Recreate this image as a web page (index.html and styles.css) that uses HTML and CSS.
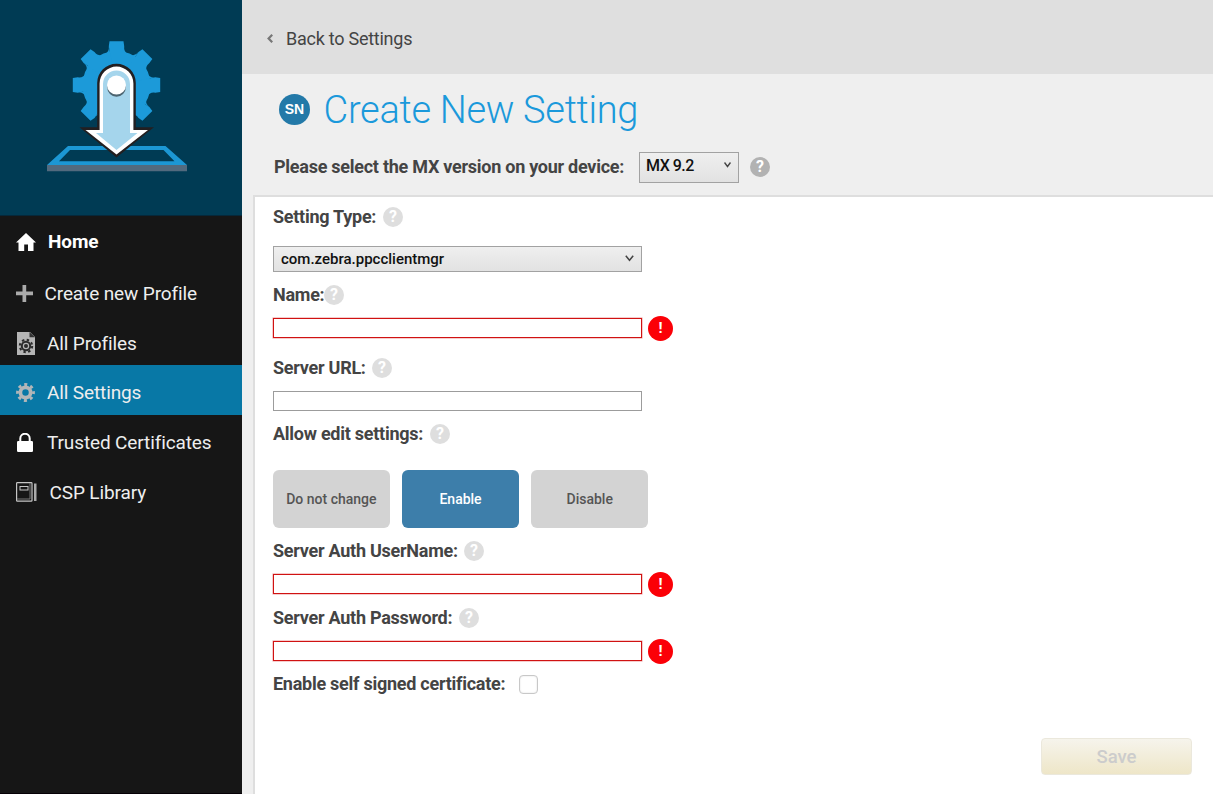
FILE: index.html
```html
<!DOCTYPE html>
<html lang="en">
<head>
<meta charset="utf-8">
<title>Create New Setting</title>
<link rel="stylesheet" href="styles.css">
</head>
<body>
<div class="app">
  <aside class="sidebar">
    <div class="brand">
      <svg width="242" height="214" viewBox="0 0 242 214">
        <defs><path id="tooth" d="M0 0L-7.7-38.8L-7-43.7H7L7.700-38.800A8 8 0 0 0 21.990-32.880Z"/></defs>
        <g transform="translate(116.5 85)" fill="#1c9ad9">
          <circle r="34"/>
          <use href="#tooth"/><use href="#tooth" transform="rotate(45)"/><use href="#tooth" transform="rotate(90)"/><use href="#tooth" transform="rotate(135)"/><use href="#tooth" transform="rotate(180)"/><use href="#tooth" transform="rotate(225)"/><use href="#tooth" transform="rotate(270)"/><use href="#tooth" transform="rotate(315)"/>
        </g>
        <path fill="#1c97d4" fill-rule="evenodd" d="M68 146H165.500L187 165H47ZM70 150L59 161.300H174.500L163.500 150Z"/>
        <path fill="#526a7e" d="M47 165H187V171.300H47Z"/>
        <path fill="#231f20" d="M97.200 127.300V83A19.300 19.300 0 0 1 135.800 83V127.300H154L116.500 157.500L79.500 127.300Z"/>
        <path fill="#fff" d="M99.600 130V83.500A16.900 16.900 0 0 1 133.400 83.500V130H148L116.500 154.500L85.500 130Z"/>
        <path fill="#a5d5ec" d="M103 133V84A13.500 13.500 0 0 1 130 84V133H137.500L116.500 150L96 133Z"/>
        <circle cx="116.500" cy="87.500" r="9.300" fill="#4c6470"/>
        <circle cx="116.500" cy="85" r="9.500" fill="#fff"/>
      </svg>
    </div>
    <nav class="nav">
      <a class="item home"><svg width="20" height="18" viewBox="0 0 20 18"><path fill="#fff" d="M10 0L20 9.500H17.500V18H12V11.500H8.200V18H2.500V9.500H0Z"/></svg><span>Home</span></a>
      <a class="item create"><svg width="17" height="17" viewBox="0 0 17 17"><path fill="#aaa" d="M6.500 0H10.200V6.500H17V10.200H10.200V17H6.500V10.200H0V6.500H6.500Z"/></svg><span>Create new Profile</span></a>
      <a class="item profiles"><svg width="18" height="23" viewBox="0 0 18 23"><path fill="#b5b5b5" d="M0 0H13L18 5V23H0Z"/><path fill="#333" d="M12.500 0L18 5.300H12.500Z"/><circle cx="9" cy="14" r="4.200" fill="none" stroke="#2b2b2b" stroke-width="2"/><circle cx="9" cy="14" r="6.200" fill="none" stroke="#2b2b2b" stroke-width="2" stroke-dasharray="2.400 2.470"/><circle cx="9" cy="14" r="2" fill="#2b2b2b"/></svg><span>All Profiles</span></a>
      <a class="item settings active"><svg width="19" height="19" viewBox="0 0 19 19"><circle cx="9.500" cy="9.500" r="5.100" fill="none" stroke="#b2b6b8" stroke-width="3.700"/><circle cx="9.500" cy="9.500" r="8" fill="none" stroke="#b2b6b8" stroke-width="2.800" stroke-dasharray="3.100 3.183" stroke-dashoffset="1.550"/></svg><span>All Settings</span></a>
      <a class="item certs"><svg width="16" height="19" viewBox="0 0 16 19"><path d="M3.300 9V5.500A4.700 4.700 0 0 1 12.700 5.500V9" fill="none" stroke="#fff" stroke-width="2"/><rect y="8" width="16" height="11" rx="1.200" fill="#fff"/></svg><span>Trusted Certificates</span></a>
      <a class="item library"><svg width="21" height="20" viewBox="0 0 21 20"><rect x=".6" y=".6" width="15.400" height="18.600" rx=".8" fill="none" stroke="#c5c5c5" stroke-width="1.200"/><path d="M1 17H14M14 1V17" stroke="#777" stroke-width="1" fill="none"/><rect x="4" y="4.500" width="8" height="3.500" fill="none" stroke="#c5c5c5" stroke-width="1"/><path d="M18 1.500H20.500V19H18Z" fill="#aaa"/></svg><span>CSP Library</span></a>
    </nav>
  </aside>
  <main class="main">
    <div class="topbar"><svg width="6" height="9" viewBox="0 0 6 9"><path d="M5.200.8L1.600 4.500L5.200 8.200" fill="none" stroke="#777" stroke-width="2.200"/></svg><span>Back to Settings</span></div>
    <header class="head">
      <div class="title"><span class="badge">SN</span><h1>Create New Setting</h1></div>
      <div class="version">
        <span class="label version-label">Please select the MX version on your device:</span>
        <div class="select select-mx"><span>MX 9.2</span><svg width="7" height="6" viewBox="0 0 7 6"><path d="M.5.500L3.500 4.500L6.500.500" fill="none" stroke="#444" stroke-width="1.400"/></svg></div>
        <span class="help dark">?</span>
      </div>
    </header>
    <section class="panel">
      <div class="row"><span class="label l-type">Setting Type:</span><span class="help">?</span></div>
      <div class="select select-type"><span>com.zebra.ppcclientmgr</span><svg width="9" height="7" viewBox="0 0 9 7"><path d="M.8.800L4.500 5.300L8.200.800" fill="none" stroke="#444" stroke-width="1.500"/></svg></div>
      <div class="row r-name"><span class="label l-name">Name:</span><span class="help">?</span></div>
      <div class="field f-name"><input class="input invalid" type="text"><span class="error">!</span></div>
      <div class="row r-url"><span class="label l-url">Server URL:</span><span class="help">?</span></div>
      <div class="field f-url"><input class="input" type="text"></div>
      <div class="row r-edit"><span class="label l-edit">Allow edit settings:</span><span class="help">?</span></div>
      <div class="choices"><div class="choice">Do not change</div><div class="choice selected">Enable</div><div class="choice">Disable</div></div>
      <div class="row r-user"><span class="label l-user">Server Auth UserName:</span><span class="help">?</span></div>
      <div class="field f-user"><input class="input invalid" type="text"><span class="error">!</span></div>
      <div class="row r-pass"><span class="label l-pass">Server Auth Password:</span><span class="help">?</span></div>
      <div class="field f-pass"><input class="input invalid" type="text"><span class="error">!</span></div>
      <div class="row r-cert"><span class="label l-cert">Enable self signed certificate:</span><span class="check"></span></div>
      <div class="save">Save</div>
    </section>
  </main>
</div>
</body>
</html>
```
FILE: styles.css
```css
* { box-sizing: border-box; }
body { margin: 0; font-family: Roboto, "Liberation Sans", sans-serif; color: #444; background: #efefef; }
svg { display: block; flex: none; }
.app { display: flex; width: 1213px; height: 794px; overflow: hidden; }
.sidebar { width: 242px; flex: none; background: #161616; border-bottom: 1px solid #050005; }
.brand { height: 216px; background: #003b54; border-bottom: 1px solid #06283a; }
.nav { display: flex; flex-direction: column; }
.item { display: flex; align-items: center; height: 50px; padding-left: 16px; font-size: 19px; line-height: 24px; letter-spacing: -0.12px; color: #eee; white-space: nowrap; }
.item span { padding-top: 1px; }
.home { height: 51px; font-weight: 700; color: #fff; gap: 12px; }
.create { height: 52px; gap: 12px; padding-left: 15.500px; }
.profiles { height: 46px; padding-left: 17px; gap: 12px; padding-top: 2px; }
.settings { gap: 12px; padding-top: 4px; }
.active { background: #0878a6; }
.certs { padding: 4px 0 0 17px; gap: 14px; }
.library { gap: 12.500px; padding-top: 4px; }
.main { flex: 1; display: flex; flex-direction: column; min-width: 0; }
.topbar { height: 74px; flex: none; background: #dfdfdf; display: flex; align-items: center; gap: 13px; padding: 3px 0 0 25px; font-size: 18px; letter-spacing: -0.25px; }
.head { height: 121px; flex: none; }
.title { display: flex; align-items: center; height: 70px; padding-left: 37px; gap: 13.500px; }
.badge { width: 31px; height: 31px; border-radius: 50%; background: #2379a8; color: #fff; font-family: "Liberation Sans", sans-serif; font-size: 14px; font-weight: 700; display: flex; align-items: center; justify-content: center; }
h1 { margin: 0; padding-top: 1px; font-size: 38px; line-height: 44px; font-weight: 300; letter-spacing: -0.3px; color: #1b99db; white-space: nowrap; }
.version { display: flex; align-items: center; height: 46px; padding-left: 32px; }
.version-label { width: 365px; }
.label { font-size: 18px; line-height: 22px; font-weight: 700; letter-spacing: -0.26px; white-space: nowrap; flex: none; }
.select { display: flex; align-items: center; justify-content: space-between; border: 1px solid #a2a2a2; background: linear-gradient(#efefef, #e2e2e2); color: #111; font-weight: 500; }
.select-mx { width: 100px; height: 31px; padding: 0 7px 4px 6px; font-size: 16px; letter-spacing: -0.5px; }
.help { width: 20px; height: 20px; flex: none; border-radius: 50%; background: #dedede; color: #fff; font-size: 16px; font-weight: 700; line-height: 20px; text-align: center; }
.dark { background: #b2b2b2; margin-left: 11px; }
.panel { flex: 1; margin-left: 11px; border: solid #dedede; border-width: 2px 0 0 2px; background: #fff; padding: 8px 0 0 18px; }
.row { display: flex; align-items: center; height: 24px; }
.select-type { width: 369px; height: 26px; margin-top: 17px; padding: 0 7px 1px 7px; font-size: 15px; }
.r-name { margin-top: 11px; }
.field { display: flex; align-items: center; gap: 6px; height: 26px; }
.input { width: 369px; height: 20px; border: 1px solid #9c9c9c; outline: 0; padding: 0; background: #fff; }
.invalid { border: 1px solid #d01212; height: 20px; box-shadow: 0 0 0 .5px #e99; }
.error { width: 25px; height: 25px; border-radius: 50%; background: #fb0007; color: #fff; font-weight: 700; font-size: 15px; line-height: 25px; text-align: center; }
.f-name { margin-top: 8px; }
.r-url { margin-top: 15px; }
.f-url { margin-top: 8px; }
.r-edit { margin-top: 8px; }
.choices { display: flex; gap: 12.500px; margin-top: 24px; }
.choice { width: 116.700px; height: 58px; border-radius: 6px; background: #d3d3d3; display: flex; align-items: center; justify-content: center; font-size: 14px; font-weight: 500; color: #555; }
.selected { background: #3d7eaa; color: #fff; }
.r-user { margin-top: 11px; }
.f-user { margin-top: 8px; }
.r-pass { margin-top: 9px; }
.f-pass { margin-top: 8px; }
.r-cert { margin-top: 8px; }
.l-type { width: 110px; }
.l-name { width: 51px; }
.l-url { width: 99px; }
.l-edit { width: 157px; }
.l-user { width: 191px; }
.l-pass { width: 186px; }
.l-cert { width: 246px; }
.check { width: 19px; height: 19px; border: 1px solid #c8c8c8; border-radius: 4px; box-shadow: inset 0 0 2px #ddd; }
.save { width: 151px; height: 37px; margin: 42px 0 0 768px; border: 1px solid #ebe8dc; border-radius: 4px; background: linear-gradient(#f6f4ec, #eee6c8); color: #ccc; font-size: 18.500px; font-weight: 500; display: flex; align-items: center; justify-content: center; }
```
